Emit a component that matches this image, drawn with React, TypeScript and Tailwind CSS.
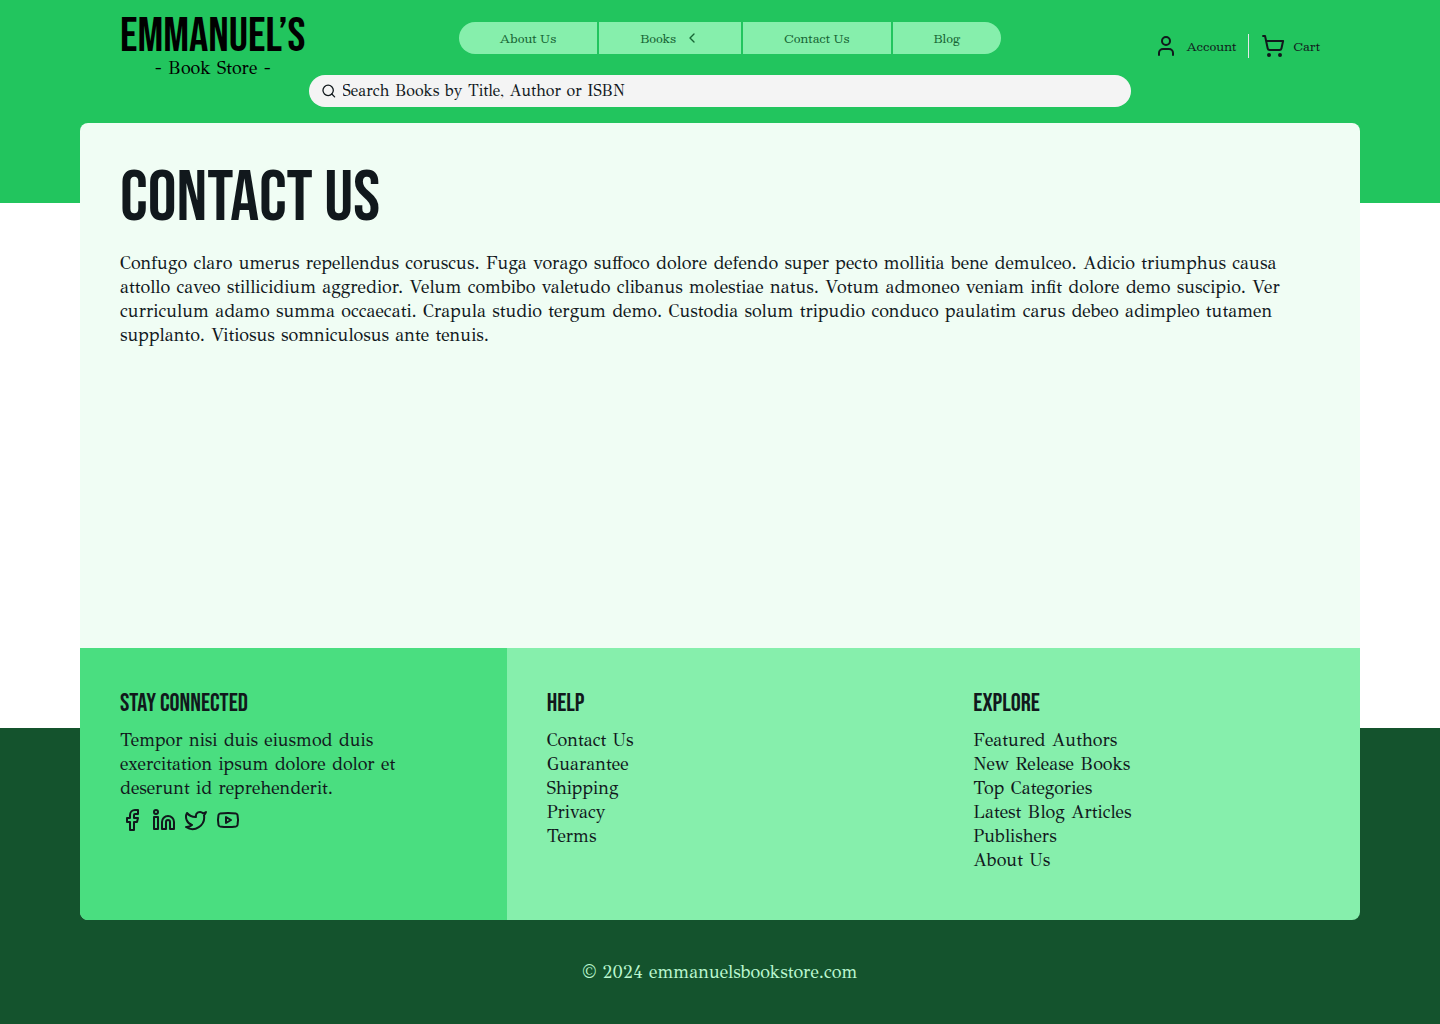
import { ChevronLeft, Facebook, Linkedin, Search, ShoppingCart, Twitter, User, Youtube } from 'lucide-react';

const display = "font-['Bebas_Neue','Roboto_Condensed',sans-serif]";
const label = "font-['Besley','DejaVu_Serif',serif]";

const nav = [
  { text: 'About Us' },
  { text: 'Books', menu: true },
  { text: 'Contact Us' },
  { text: 'Blog' },
];

const columns = [
  { title: 'Help', links: ['Contact Us', 'Guarantee', 'Shipping', 'Privacy', 'Terms'] },
  {
    title: 'Explore',
    links: ['Featured Authors', 'New Release Books', 'Top Categories', 'Latest Blog Articles', 'Publishers', 'About Us'],
  },
];

const socials = [
  { name: 'Facebook', Icon: Facebook },
  { name: 'LinkedIn', Icon: Linkedin },
  { name: 'Twitter', Icon: Twitter },
  { name: 'YouTube', Icon: Youtube },
];

function Header() {
  return (
    <header className="bg-[#22c55e] px-20 pt-4 pb-24">
      <div className="flex h-[59px] items-center justify-between px-10">
        <a href="#" className="flex flex-col items-center gap-0.5 self-start pt-[3px] text-black">
          <span className={`${display} text-5xl leading-[35px]`}>EMMANUEL’S</span>
          <span className="text-lg leading-6">- Book Store -</span>
        </a>
        <nav className="mt-1.5 flex gap-0.5 self-start overflow-hidden rounded-full">
          {nav.map((item) => (
            <a
              key={item.text}
              href="#"
              className={`${label} flex h-8 items-center gap-2 bg-[#86efac] px-[41px] text-xs text-[#166534]`}
            >
              {item.text}
              {item.menu && <ChevronLeft size={16} />}
            </a>
          ))}
        </nav>
        <div className={`${label} flex items-center text-xs`}>
          <a href="#" className="flex items-center gap-2 pr-3">
            <User size={24} />
            Account
          </a>
          <a href="#" className="flex items-center gap-2 border-l border-gray-200 pl-3">
            <ShoppingCart size={24} />
            Cart
          </a>
        </div>
      </div>
      <label className="mx-auto flex h-8 w-full max-w-[822px] items-center gap-1.5 rounded-full bg-[#f4f4f4] px-3">
        <Search size={16} />
        <input
          type="search"
          aria-label="Search books"
          placeholder="Search Books by Title, Author or ISBN"
          className="w-full bg-transparent text-base outline-none placeholder:text-[#11181c]"
        />
      </label>
    </header>
  );
}

function Footer() {
  return (
    <footer className="bg-[#14532d] px-20">
      <div className="-mt-20 grid grid-cols-3 overflow-hidden rounded-b-lg bg-[#86efac]">
        <section className="bg-[#4ade80] p-10">
          <h2 className={`${display} mb-2 text-[25px] leading-8`}>Stay Connected</h2>
          <p className="max-w-xs">Tempor nisi duis eiusmod duis exercitation ipsum dolore dolor et deserunt id reprehenderit.</p>
          <div className="mt-2 flex gap-2">
            {socials.map(({ name, Icon }) => (
              <a key={name} href="#" aria-label={name}>
                <Icon size={24} />
              </a>
            ))}
          </div>
        </section>
        {columns.map((column) => (
          <section key={column.title} className="px-10 pt-10 pb-12">
            <h2 className={`${display} mb-2 text-[25px] leading-8`}>{column.title}</h2>
            <ul>
              {column.links.map((link) => (
                <li key={link}>
                  <a href="#">{link}</a>
                </li>
              ))}
            </ul>
          </section>
        ))}
      </div>
      <p className="py-10 text-center text-[#bbf7d0]">© 2024 emmanuelsbookstore.com</p>
    </footer>
  );
}

export default function App() {
  return (
    <div className="flex min-h-screen flex-col bg-white font-['GFS_Didot','Noto_Serif',serif] text-lg leading-6 text-[#11181c]">
      <Header />
      <main className="mx-20 -mt-20 mb-20 grow rounded-t-lg bg-[#f0fdf4] p-10">
        <h1 className={`${display} mb-4 text-7xl leading-none`}>Contact Us</h1>
        <p>
          Confugo claro umerus repellendus coruscus. Fuga vorago suffoco dolore defendo super pecto mollitia bene
          demulceo. Adicio triumphus causa attollo caveo stillicidium aggredior. Velum combibo valetudo clibanus molestiae
          natus. Votum admoneo veniam infit dolore demo suscipio. Ver curriculum adamo summa occaecati. Crapula studio
          tergum demo. Custodia solum tripudio conduco paulatim carus debeo adimpleo tutamen supplanto. Vitiosus
          somniculosus ante tenuis.
        </p>
      </main>
      <Footer />
    </div>
  );
}
